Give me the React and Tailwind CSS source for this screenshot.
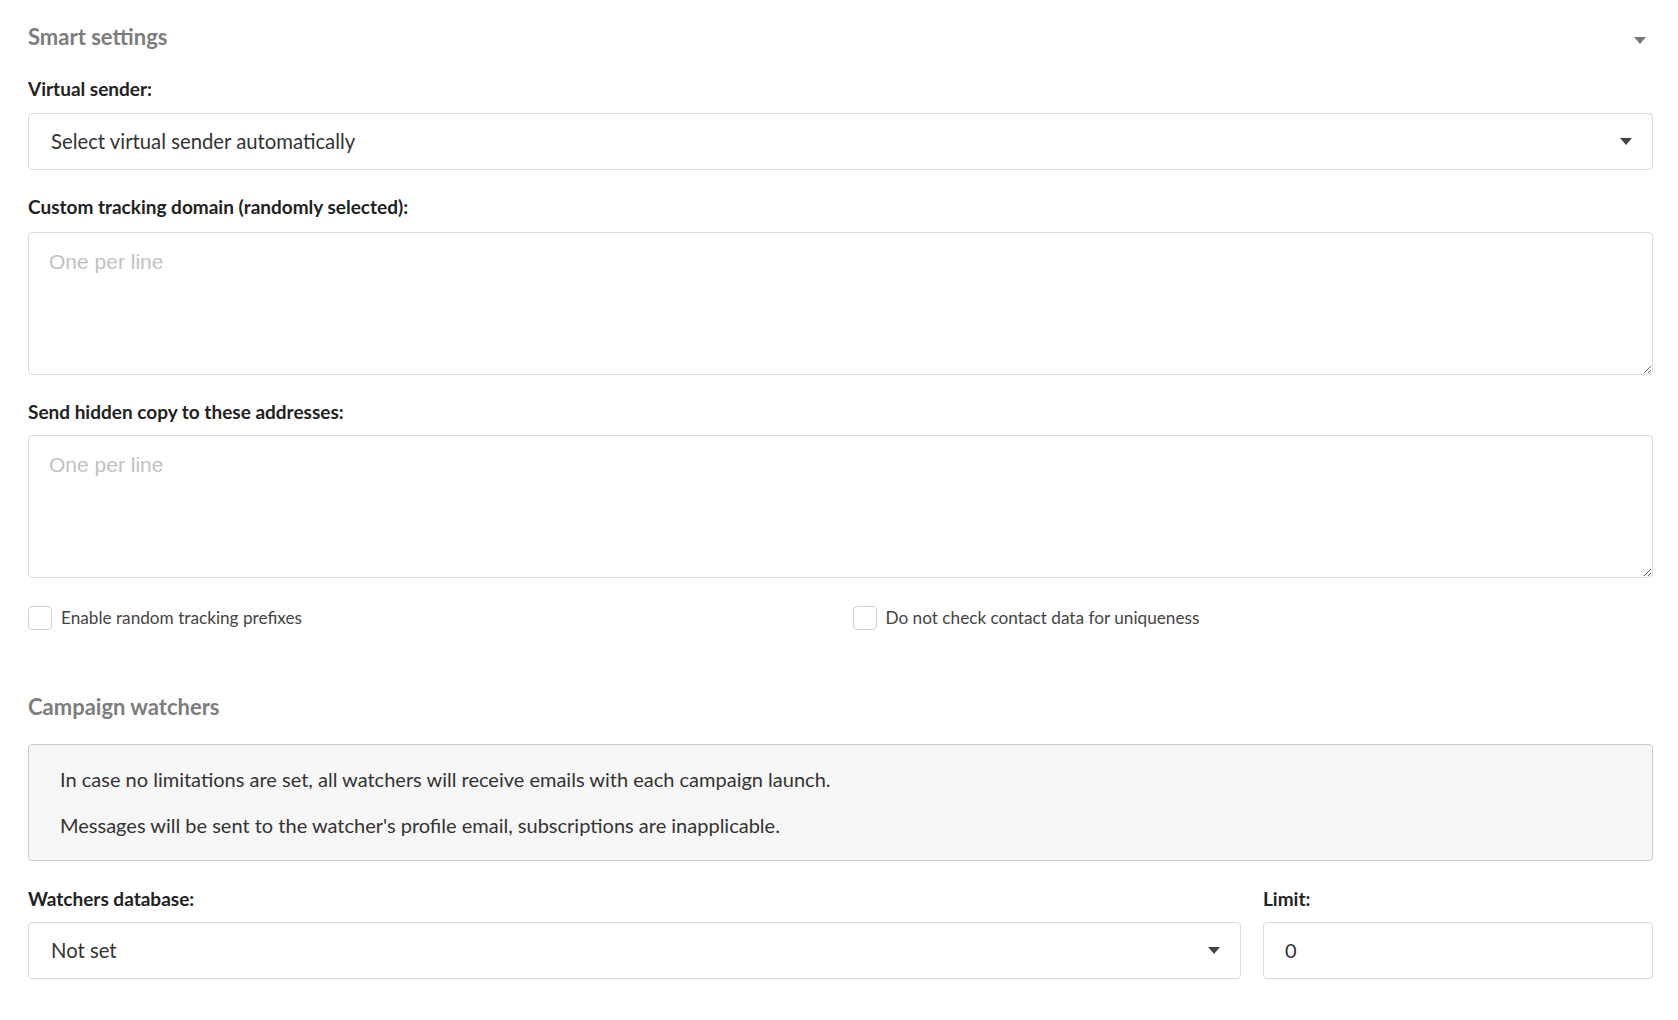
import React from 'react';

function Caret({ className = '' }) {
  return (
    <svg width="12" height="7" viewBox="0 0 12 7" className={className}>
      <path d="M0 0 L12 0 L6 7 Z" fill="currentColor" />
    </svg>
  );
}

function Label({ children, className = '' }) {
  return <p className={`text-[19px] font-bold leading-[24px] text-[#222] ${className}`}>{children}</p>;
}

function SelectBox({ value, className = '' }) {
  return (
    <div
      className={`flex h-[57px] items-center justify-between rounded-[4px] border border-[#dcdcdc] bg-white pl-[22px] pr-[20px] text-[20.3px] text-[#333] ${className}`}
    >
      <span>{value}</span>
      <Caret className="text-[#444]" />
    </div>
  );
}

function Area({ className = '' }) {
  return (
    <textarea
      placeholder="One per line"
      className={`block h-[143px] w-full rounded-[4px] border border-[#dcdcdc] bg-white px-[20px] py-[16px] font-['Liberation_Sans',Arial,sans-serif] text-[21px] leading-[26px] text-[#333] outline-none placeholder:text-[#c2c2c2] ${className}`}
    />
  );
}

function Check({ label }) {
  return (
    <label className="flex items-center gap-[9px]">
      <span className="h-[24px] w-[24px] rounded-[4px] border border-[#cfcfcf] bg-white" />
      <span className="text-[17.2px] text-[#444]">{label}</span>
    </label>
  );
}

export default function App() {
  return (
    <div className="min-h-screen bg-white pl-[28px] pr-[25px] pt-[23px] font-['Lato','Noto_Sans',sans-serif]">
      <div className="flex h-[27px] items-center justify-between">
        <h2 className="text-[22px] font-bold leading-[27px] text-[#7d7d7d]">Smart settings</h2>
        <Caret className="mr-[7px] mt-[7px] text-[#777]" />
      </div>

      <Label className="mt-[27px]">Virtual sender:</Label>
      <SelectBox value="Select virtual sender automatically" className="mt-[12px]" />

      <Label className="mt-[25px]">Custom tracking domain (randomly selected):</Label>
      <Area className="mt-[13px]" />

      <Label className="mt-[25px]">Send hidden copy to these addresses:</Label>
      <Area className="mt-[11px]" />

      <div className="mt-[27px] grid grid-cols-2 gap-[24px]">
        <Check label="Enable random tracking prefixes" />
        <Check label="Do not check contact data for uniqueness" />
      </div>

      <h2 className="mt-[62px] text-[22px] font-bold leading-[27px] text-[#7d7d7d]">Campaign watchers</h2>

      <div className="mt-[24px] rounded-[4px] border border-[#cccccc] bg-[#f7f7f7] pb-[21px] pl-[31px] pr-[20px] pt-[20px] text-[20px] leading-[28px] text-[#333]">
        <p>In case no limitations are set, all watchers will receive emails with each campaign launch.</p>
        <p className="mt-[18px]">Messages will be sent to the watcher's profile email, subscriptions are inapplicable.</p>
      </div>

      <div className="mt-[26px] grid grid-cols-[1213px_1fr] gap-[22px]">
        <div>
          <Label>Watchers database:</Label>
          <SelectBox value="Not set" className="mt-[11px]" />
        </div>
        <div>
          <Label>Limit:</Label>
          <div className="mt-[11px] flex h-[57px] items-center rounded-[4px] border border-[#dcdcdc] bg-white px-[21px] text-[20px] text-[#333]">
            0
          </div>
        </div>
      </div>
    </div>
  );
}
